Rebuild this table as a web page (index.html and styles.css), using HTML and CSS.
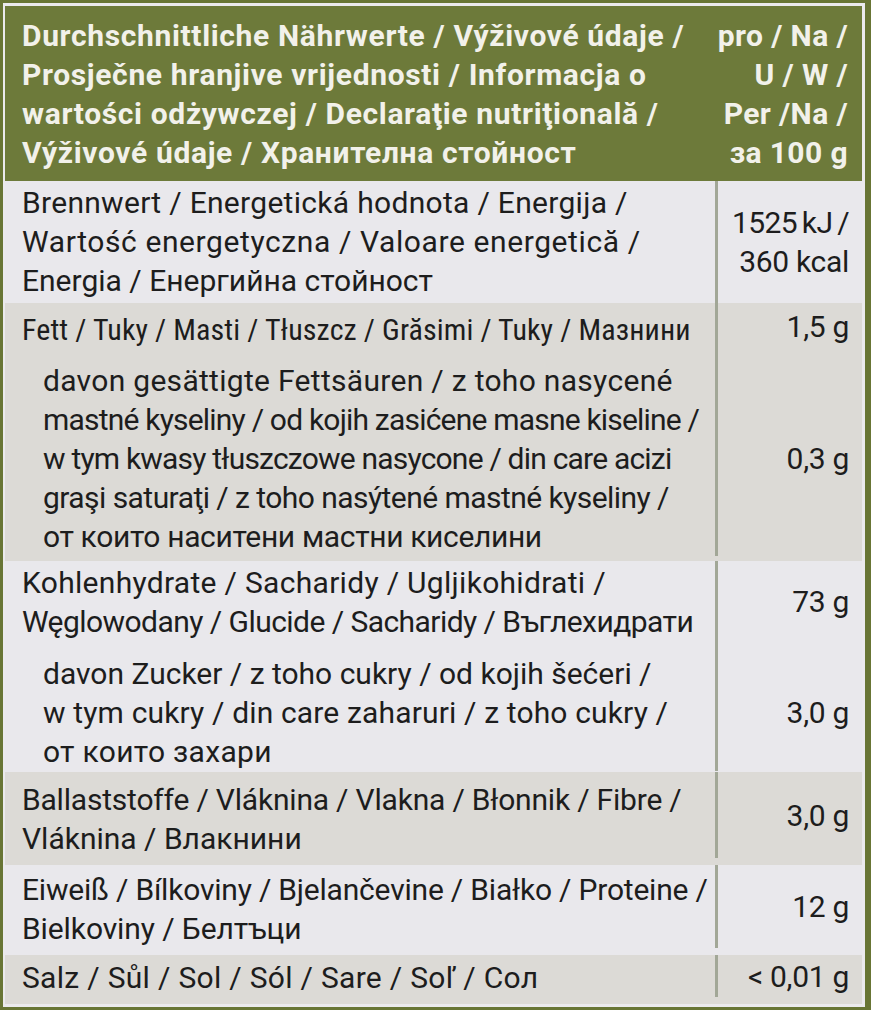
FILE: index.html
```html
<!DOCTYPE html>
<html lang="de">
<head>
<meta charset="utf-8">
<link rel="stylesheet" href="styles.css">
</head>
<body>
<div class="frame">
  <div class="head">
    <div class="head-lbl">Durchschnittliche Nährwerte / Výživové údaje /<br>Prosječne hranjive vrijednosti / Informacja o<br>wartości odżywczej / Declaraţie nutriţională /<br>Výživové údaje / Хранителна стойност</div>
    <div class="head-val">pro / Na /<br>U / W /<br>Per /Na /<br>за 100 g</div>
  </div>

  <div class="group light g-energy">
    <div class="lbl">Brennwert / Energetická hodnota / Energija /<br><span class="ls-p06">Wartość energetyczna / Valoare energetică /</span><br><span class="ls-0">Energia / Енергийна стойност</span></div>
    <div class="val"><div class="vtxt"><span class="narrow">1525 kJ /</span><br>360 kcal</div></div>
  </div>

  <div class="group gray g-fat">
    <div class="lbl squeezed">Fett / Tuky / Masti / Tłuszcz / Grăsimi / Tuky / Мазнини</div>
    <div class="val">1,5 g</div>
    <div class="lbl sub">davon gesättigte Fettsäuren / z toho nasycené<br><span class="ls-m08">mastné kyseliny / od kojih zasićene masne kiseline /</span><br><span class="ls-m08">w tym kwasy tłuszczowe nasycone / din care acizi</span><br><span class="ls-m055">graşi saturaţi / z toho nasýtené mastné kyseliny /</span><br><span class="ls-m035">от които наситени мастни киселини</span></div>
    <div class="val sub">0,3 g</div>
  </div>

  <div class="group light g-carb">
    <div class="lbl">Kohlenhydrate / Sacharidy / Ugljikohidrati /<br><span class="ls-m055">Węglowodany / Glucide / Sacharidy / Въглехидрати</span></div>
    <div class="val">73 g</div>
    <div class="lbl sub"><span class="ls-0">davon Zucker / z toho cukry / od kojih šećeri /</span><br><span class="ls-p015">w tym cukry / din care zaharuri / z toho cukry /</span><br>от които захари</div>
    <div class="val sub">3,0 g</div>
  </div>

  <div class="group gray g-fibre">
    <div class="lbl"><span class="ls-m02">Ballaststoffe / Vláknina / Vlakna / Błonnik / Fibre /</span><br><span class="ls-0">Vláknina / Влакнини</span></div>
    <div class="val">3,0 g</div>
  </div>

  <div class="group light g-prot">
    <div class="lbl"><span class="ls-m02">Eiweiß / Bílkoviny / Bjelančevine / Białko / Proteine /</span><br><span class="ls-m01">Bielkoviny / Белтъци</span></div>
    <div class="val">12 g</div>
  </div>

  <div class="group gray g-salt">
    <div class="lbl">Salz / Sůl / Sol / Sól / Sare / Soľ / Сол</div>
    <div class="val">&lt; 0,01 g</div>
  </div>
</div>
</body>
</html>
```
FILE: styles.css
```css
html, body {
  margin: 0;
  padding: 0;
  background: #ebeaed;
}

.frame {
  width: 871px;
  height: 1010px;
  box-sizing: border-box;
  border: 3px solid #687535;
  border-right-width: 6px;
  padding: 3px 3px 3px 2px;
  background: #ebeaed;
  font-family: Roboto, "Open Sans", sans-serif;
  font-size: 30px;
  line-height: 39px;
  letter-spacing: 0.3px;
  color: #1d1d1d;
  white-space: nowrap;
}

.head {
  display: grid;
  grid-template-columns: 1fr 150px;
  background: #6d7a3a;
  color: #f2f1ea;
  font-weight: 700;
  height: 175px;
  box-sizing: border-box;
  padding: 10px 0 0 0;
}

.head-lbl {
  padding-left: 17px;
  letter-spacing: 0.65px;
}

.head-val {
  text-align: right;
  padding-right: 14px;
  letter-spacing: 0.4px;
}

.group {
  display: grid;
  grid-template-columns: 710px 1fr;
  align-content: start;
  box-sizing: border-box;
  font-weight: 400;
}

.light { background: #e9e8ec; }
.gray { background: #dcdad6; }

.lbl {
  box-sizing: border-box;
  padding-left: 17px;
}

.lbl.sub {
  padding-left: 38px;
}

.lbl.squeezed {
  font-family: "Roboto Condensed", Roboto, sans-serif;
  letter-spacing: 0.1px;
}

/* per-line tracking to follow the printed label's line lengths */
.ls-p06 { letter-spacing: 0.6px; }
.ls-p015 { letter-spacing: 0.15px; }
.ls-0 { letter-spacing: 0; }
.ls-m01 { letter-spacing: -0.1px; }
.ls-m02 { letter-spacing: -0.2px; }
.ls-m035 { letter-spacing: -0.35px; }
.ls-m055 { letter-spacing: -0.55px; }
.ls-m08 { letter-spacing: -0.8px; }

.val {
  box-sizing: border-box;
  border-left: 3px solid #a2a797;
  padding-right: 13px;
  display: flex;
  align-items: center;
  justify-content: flex-end;
  text-align: right;
  align-self: stretch;
  letter-spacing: -0.3px;
}

.vtxt {
  text-align: right;
}

.narrow {
  letter-spacing: -0.6px;
  word-spacing: -2px;
}

.g-energy { height: 122px; }
.g-energy .lbl { padding-top: 2px; padding-bottom: 3px; }

.g-fat { height: 258px; }
.g-fat .lbl:first-child { padding-top: 7px; }
.g-fat .sub { padding-top: 12px; }

.g-carb { height: 211px; }
.g-carb .lbl:first-child { padding-top: 2px; }
.g-carb .sub { padding-top: 13px; }

.g-fibre { height: 93px; }
.g-fibre .lbl { padding-top: 8px; }

.g-prot { height: 90px; }
.g-prot .lbl { padding-top: 5px; }

.g-salt { height: 49px; }
.g-salt .lbl { padding-top: 3px; }
```
